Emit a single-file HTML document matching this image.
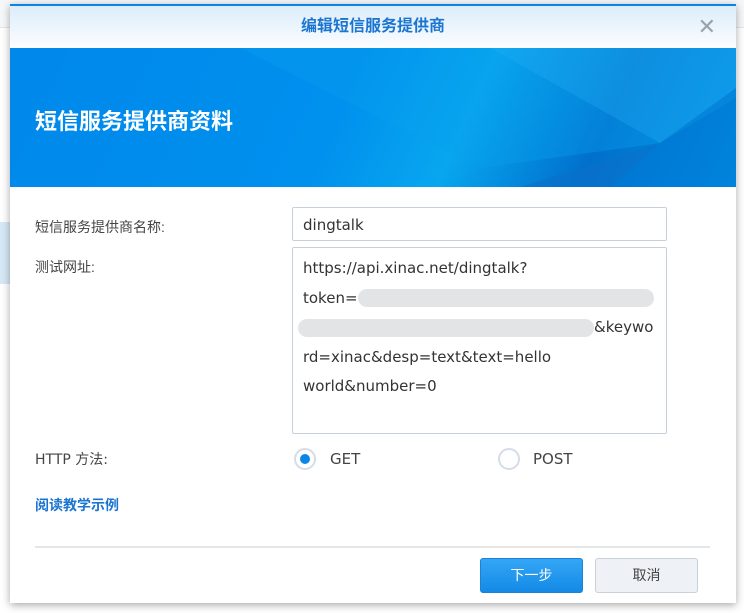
<!DOCTYPE html>
<html><head><meta charset="utf-8"><style>
*{margin:0;padding:0;box-sizing:border-box}
body{width:744px;height:613px;overflow:hidden;background:#fff;font-family:"Liberation Sans","Noto Sans CJK SC",sans-serif;position:relative}
.bg1{position:absolute;left:0;top:0;width:744px;height:28px;border-bottom:1px solid #e2e6ea;background:#f5f7f9}
.bgsel{position:absolute;left:0;top:222px;width:12px;height:62px;background:#d7e8f6}
.dlg{position:absolute;left:10px;top:4px;width:726px;height:599px;background:#fff;box-shadow:0 2px 8px rgba(0,0,0,.35);border-top:2px solid #0a86e0}
.hdr{height:42px;background:linear-gradient(#dcecfa,#fbfdff);text-align:center;font-size:16px;font-weight:bold;color:#1a75d1;line-height:42px}
.x{position:absolute;right:20px;top:0;font-size:22px;color:#9aa3ab;font-weight:normal;line-height:42px}
.ban{height:139px;background:linear-gradient(115deg,#0088ea 0%,#0090ee 45%,#08a6ef 62%,#0070cc 80%,#0095e8 100%);position:relative;overflow:hidden}
.ban h1{position:absolute;left:25px;top:56px;font-size:22px;color:#fff;font-weight:bold}
.lbl{position:absolute;left:25px;font-size:14px;color:#444}
.dv{font-family:"DejaVu Sans","Noto Sans CJK SC",sans-serif}
.inp{position:absolute;left:282px;width:375px;border:1px solid #c5d0da;border-radius:2px;font-size:15px;color:#333;padding-left:10px;font-family:"DejaVu Sans",sans-serif}
.ta div{height:29.6px;line-height:29.6px}
.blur{display:inline-block;height:18px;background:#e2e4e6;border-radius:9px;vertical-align:middle}
.radio{position:absolute;width:22px;height:22px;border-radius:50%;border:2px solid #d5dde6;background:#fff}
.radio.on::after{content:"";position:absolute;left:4px;top:4px;width:10px;height:10px;border-radius:50%;background:#0b86e6}
.btn{position:absolute;top:558px;height:35px;border-radius:3px;font-size:14px;text-align:center;line-height:33px}
</style></head><body>
<div class="bg1"></div><div class="bgsel"></div>
<div class="dlg">
<div class="hdr">编辑短信服务提供商<span class="x">✕</span></div>
<div class="ban">
<svg width="726" height="139" style="position:absolute;left:0;top:0">
<polygon points="480,0 726,0 726,50 650,95" fill="#1aa7f0" opacity=".55"/>
<polygon points="650,95 726,40 726,139 600,139" fill="#0078d4" opacity=".6"/>
<polygon points="510,139 650,95 600,139" fill="#0c6fc8" opacity=".6"/>
<polygon points="230,0 480,0 650,95 470,120" fill="#0aa0ee" opacity=".35"/>
</svg>
<h1>短信服务提供商资料</h1></div>
</div>
<div class="lbl" style="left:35px;top:217px">短信服务提供商名称:</div>
<div class="lbl" style="left:35px;top:257px">测试网址:</div>
<div class="lbl dv" style="left:35px;top:449px">HTTP 方法:</div>
<div class="lbl" style="left:35px;top:495px;color:#1a75d1;font-weight:bold">阅读教学示例</div>
<div class="inp" style="left:292px;top:207px;height:34px;line-height:34px">dingtalk</div>
<div class="inp ta" style="left:292px;top:247px;height:187px;padding-top:6px">
<div>https://api.xinac.net/dingtalk?</div>
<div>token=<span class="blur" style="width:296px"></span></div>
<div><span class="blur" style="width:296px;margin-left:-5px"></span>&amp;keywo</div>
<div>rd=xinac&amp;desp=text&amp;text=hello</div>
<div>world&amp;number=0</div>
</div>
<div class="radio on" style="left:294px;top:448px"></div>
<div class="lbl dv" style="left:330px;top:450px;font-size:15px">GET</div>
<div class="radio" style="left:498px;top:448px"></div>
<div class="lbl dv" style="left:533px;top:450px;font-size:15px">POST</div>
<div style="position:absolute;left:35px;top:546px;width:675px;height:2px;background:#e4e6e8"></div>
<div class="btn" style="left:480px;width:103px;background:linear-gradient(#34a6f5,#148ae6);border:1px solid #1a83d8;color:#fff">下一步</div>
<div class="btn" style="left:595px;width:103px;background:#eef2f6;border:1px solid #c8d0d8;color:#444">取消</div>
</body></html>
